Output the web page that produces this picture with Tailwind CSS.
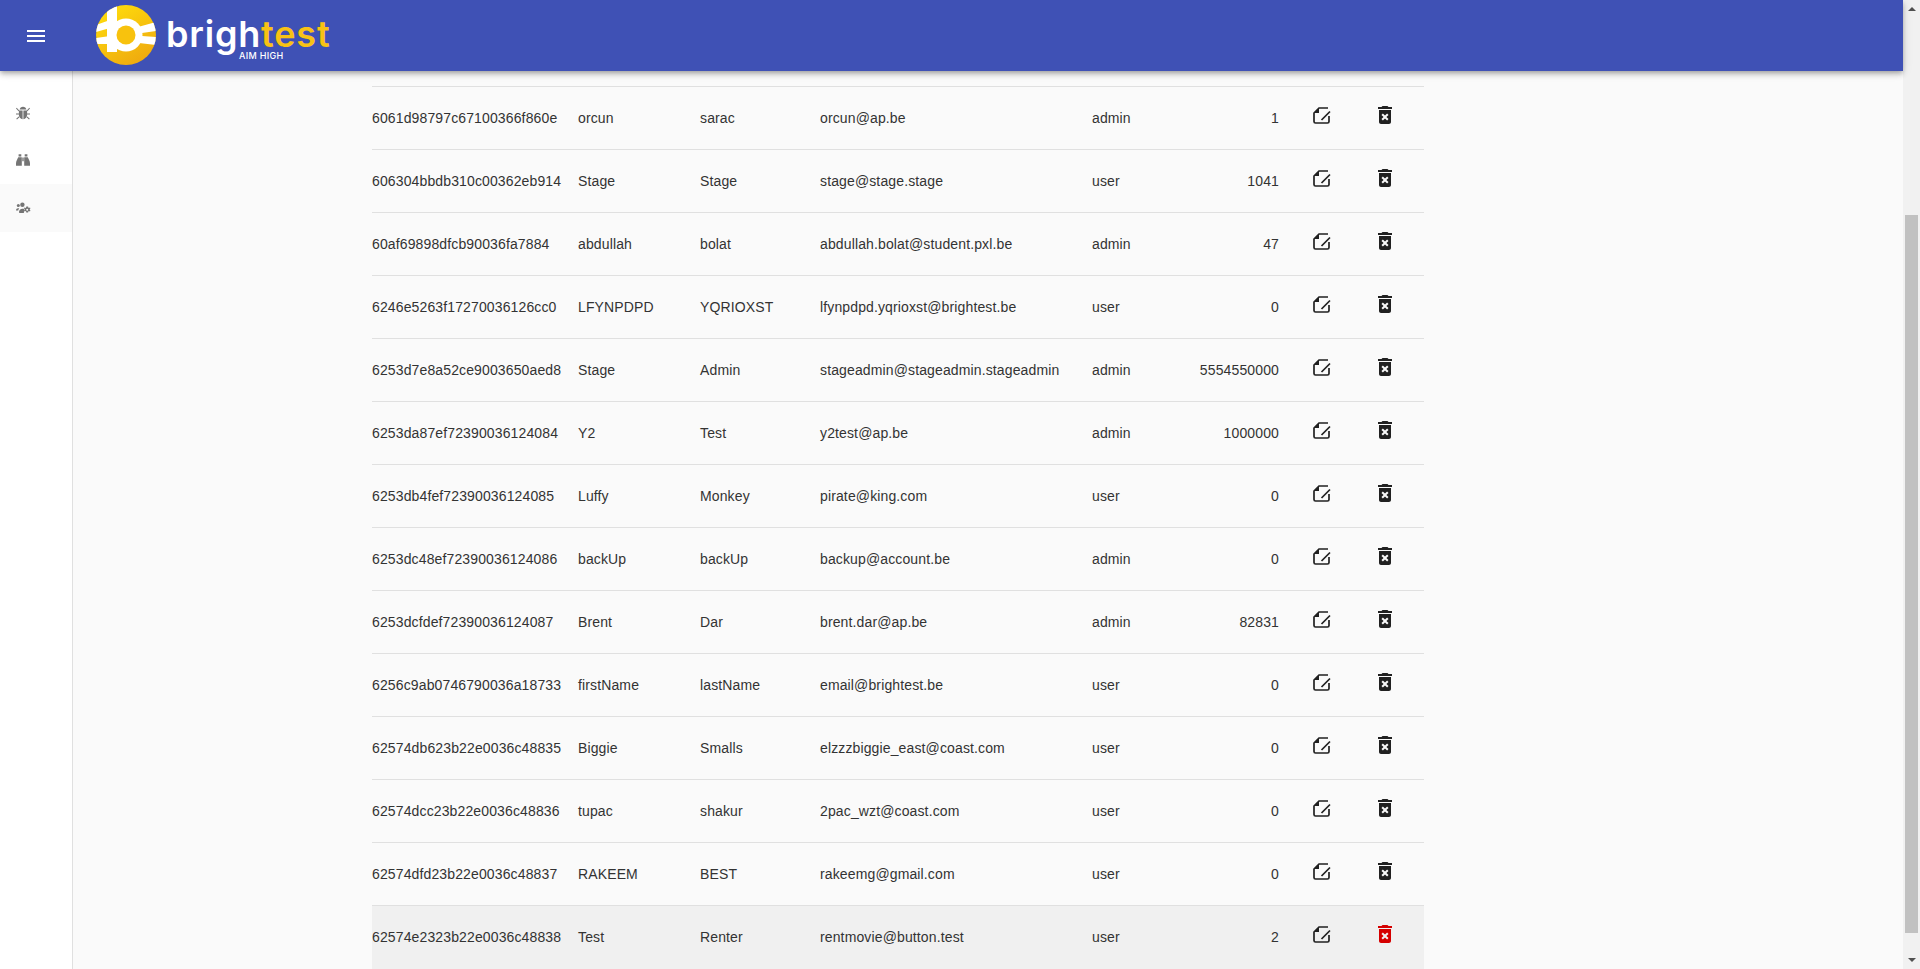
<!DOCTYPE html>
<html lang="en">
<head>
    <meta charset="UTF-8">
    <title>Brightest</title>
    <script src="https://cdn.jsdelivr.net/npm/@tailwindcss/browser@4"></script>
</head>
<body class="h-[969px] overflow-hidden bg-[#fafafa] font-['Liberation_Sans',Arial,sans-serif] text-[14px] tracking-[0.13px] text-[#333333]">
<!-- shared table icons -->
<svg class="hidden">
    <symbol id="edit-icon" viewBox="0 0 24 24">
        <path fill="none" stroke="currentColor" stroke-width="1.700" d="M19 5H10L5 10V18.500Q5 20 6.500 20H18.500Q20 20 20 18.500V13"/>
        <path fill="currentColor" d="M5 10H10V5z"/>
        <path fill="none" stroke="currentColor" stroke-width="1.700" d="M12.500 17L21 8.500"/>
    </symbol>
    <symbol id="trash-icon" viewBox="0 0 24 24">
        <path fill="currentColor" d="M6 19c0 1.100.9 2 2 2h8c1.100 0 2-.9 2-2V7H6v12zm2.460-7.120l1.410-1.410L12 12.590l2.120-2.120 1.410 1.410L13.410 14l2.120 2.120-1.410 1.410L12 15.410l-2.120 2.120-1.410-1.410L10.590 14l-2.130-2.120zM15.500 4l-1-1h-5l-1 1H5v2h14V4z"/>
    </symbol>
</svg>

<div class="flex h-[969px]">
    <div class="flex w-[1903px] flex-col">
        <!-- Header -->
        <header class="relative z-10 flex h-[71px] items-center bg-[#3f51b5] shadow-[0_2px_4px_-1px_rgba(0,0,0,.2),0_4px_5px_0_rgba(0,0,0,.14),0_1px_10px_0_rgba(0,0,0,.12)]">
            <button class="mt-[1px] ml-[27px] flex w-[18px] flex-col gap-[3px]">
                <span class="h-[2px] bg-white"></span>
                <span class="h-[2px] bg-white"></span>
                <span class="h-[2px] bg-white"></span>
            </button>
            <svg class="-mt-[1px] ml-[51px] shrink-0" width="60" height="60" viewBox="0 0 60 60">
                <defs>
                    <linearGradient id="sun" x1="0.2" y1="0" x2="0.8" y2="1">
                        <stop offset="0" stop-color="#ffdd0c"/>
                        <stop offset="1" stop-color="#eea70f"/>
                    </linearGradient>
                    <clipPath id="disc"><circle cx="30" cy="30" r="30"/></clipPath>
                </defs>
                <circle cx="30" cy="30" r="30" fill="url(#sun)"/>
                <g clip-path="url(#disc)" fill="#fff">
                    <rect x="11" y="0" width="10" height="47"/>
                    <path d="M0 20 L14 15 L14 23 L0 27Z M0 33 L14 31 L14 39 L0 39Z"/>
                    <path d="M42 22 L60 17 L60 26 L46 28Z M46 31 L60 32 L60 40 L43 38Z"/>
                    <circle cx="30" cy="30" r="16.500"/>
                </g>
                <circle cx="30" cy="30" r="9.500" fill="#f8c20d"/>
            </svg>
            <div class="relative -mt-[4px] ml-[10px] font-['Inter',sans-serif] text-[36px] leading-none font-semibold tracking-[0.8px] text-white">
                <span>brigh</span><span class="text-[#f8c215]">test</span>
                <span class="absolute top-[35px] left-[73px] text-[9px] leading-none font-medium tracking-[0.3px] whitespace-nowrap text-white">AIM HIGH</span>
            </div>
        </header>

        <div class="flex min-h-0 flex-1">
            <!-- Sidebar -->
            <nav class="w-[73px] shrink-0 border-r border-[#e0e0e0] bg-white pt-[17px]">
                <div class="flex h-[48px] items-center pl-[16px]">
                    <svg class="mt-[2px]" width="14" height="14" viewBox="0 0 14 14" fill="#757575">
                        <path d="M3.600 3.600C3.900 1.900 5.300.7 7 .7s3.100 1.200 3.400 2.900z"/>
                        <path d="M2.900 4.600h3.700v8.700C4.500 13 2.900 11.200 2.900 9zM7.400 4.600h3.700V9c0 2.200-1.600 4-3.700 4.300z"/>
                        <path d="M.7 1.800l2.600 2.800-.7.7L0 2.500zM13.300 1.800l-2.600 2.800.7.7L14 2.500zM0 7.400h3v1.100H0zM11 7.400h3v1.100h-3zM2.700 10.400l.7.8L1 13.400l-.8-.7zM11.300 10.400l-.7.8 2.400 2.200.8-.7z"/>
                    </svg>
                </div>
                <div class="flex h-[48px] items-center pl-[16px]">
                    <svg width="14" height="14" viewBox="0 0 14 14" fill="#757575">
                        <path d="M2.600 1.200h2.700v2.400H2.600zM8.700 1.200h2.700v2.400H8.700z"/>
                        <path d="M2.200 4.300h3.600v8.500H0v-2.300c0-1.200.3-2 .8-3.200zM8.200 4.300h3.600l1.400 3c.5 1.200.8 2 .8 3.200v2.300H8.200z"/>
                        <path d="M6.300 4.600h1.400v3.600H6.300z"/>
                    </svg>
                </div>
                <div class="flex h-[48px] items-center bg-[#fafafa] pl-[16px]">
                    <svg width="15" height="12" viewBox="0 0 15 12" fill="#757575">
                        <circle cx="2.300" cy="3.600" r="1.500"/>
                        <circle cx="6.400" cy="2.700" r="2.200"/>
                        <path d="M0 8.400c0-1.400.9-2.200 2-2.200.5 0 .9.1 1.200.4-.6.6-.9 1.300-1 2zM3 10c0-2 1.400-3.300 3.400-3.300.7 0 1.200.1 1.700.4l-.2 4H4c-.6 0-1-.4-1-1.100z"/>
                        <path fill-rule="evenodd" d="M11.200 4.400l.9.1.2 1 .7.4.9-.4.6.8-.7.7v.9l.7.7-.6.8-.9-.4-.7.4-.2 1h-1.800l-.2-1-.7-.4-.9.4-.6-.8.7-.7v-.9l-.7-.7.6-.8.9.4.7-.4.2-1zm0 2.300a1 1 0 100 2 1 1 0 000-2z"/>
                    </svg>
                </div>
            </nav>

            <!-- Users table -->
            <main class="min-w-0 flex-1 pt-[15px] pl-[299px]">
                <table class="w-[1052px] table-fixed border-collapse">
                    <colgroup>
                        <col class="w-[206px]"><col class="w-[122px]"><col class="w-[120px]"><col class="w-[272px]"><col class="w-[88px]"><col class="w-[99px]"><col class="w-[84px]"><col class="w-[61px]">
                    </colgroup>
                    <tbody>
                        <tr class="h-[63px] border-t border-[#e0e0e0]"><td>6061d98797c67100366f860e</td><td>orcun</td><td>sarac</td><td>orcun@ap.be</td><td>admin</td><td class="text-right">1</td><td><svg class="mx-auto -mt-[6px] text-[#212121]" width="24" height="24"><use href="#edit-icon"/></svg></td><td><svg class="-mt-[6px] ml-[10px] text-[#212121]" width="24" height="24"><use href="#trash-icon"/></svg></td></tr>
                        <tr class="h-[63px] border-t border-[#e0e0e0]"><td>606304bbdb310c00362eb914</td><td>Stage</td><td>Stage</td><td>stage@stage.stage</td><td>user</td><td class="text-right">1041</td><td><svg class="mx-auto -mt-[6px] text-[#212121]" width="24" height="24"><use href="#edit-icon"/></svg></td><td><svg class="-mt-[6px] ml-[10px] text-[#212121]" width="24" height="24"><use href="#trash-icon"/></svg></td></tr>
                        <tr class="h-[63px] border-t border-[#e0e0e0]"><td>60af69898dfcb90036fa7884</td><td>abdullah</td><td>bolat</td><td>abdullah.bolat@student.pxl.be</td><td>admin</td><td class="text-right">47</td><td><svg class="mx-auto -mt-[6px] text-[#212121]" width="24" height="24"><use href="#edit-icon"/></svg></td><td><svg class="-mt-[6px] ml-[10px] text-[#212121]" width="24" height="24"><use href="#trash-icon"/></svg></td></tr>
                        <tr class="h-[63px] border-t border-[#e0e0e0]"><td>6246e5263f17270036126cc0</td><td>LFYNPDPD</td><td>YQRIOXST</td><td>lfynpdpd.yqrioxst@brightest.be</td><td>user</td><td class="text-right">0</td><td><svg class="mx-auto -mt-[6px] text-[#212121]" width="24" height="24"><use href="#edit-icon"/></svg></td><td><svg class="-mt-[6px] ml-[10px] text-[#212121]" width="24" height="24"><use href="#trash-icon"/></svg></td></tr>
                        <tr class="h-[63px] border-t border-[#e0e0e0]"><td>6253d7e8a52ce9003650aed8</td><td>Stage</td><td>Admin</td><td>stageadmin@stageadmin.stageadmin</td><td>admin</td><td class="text-right">5554550000</td><td><svg class="mx-auto -mt-[6px] text-[#212121]" width="24" height="24"><use href="#edit-icon"/></svg></td><td><svg class="-mt-[6px] ml-[10px] text-[#212121]" width="24" height="24"><use href="#trash-icon"/></svg></td></tr>
                        <tr class="h-[63px] border-t border-[#e0e0e0]"><td>6253da87ef72390036124084</td><td>Y2</td><td>Test</td><td>y2test@ap.be</td><td>admin</td><td class="text-right">1000000</td><td><svg class="mx-auto -mt-[6px] text-[#212121]" width="24" height="24"><use href="#edit-icon"/></svg></td><td><svg class="-mt-[6px] ml-[10px] text-[#212121]" width="24" height="24"><use href="#trash-icon"/></svg></td></tr>
                        <tr class="h-[63px] border-t border-[#e0e0e0]"><td>6253db4fef72390036124085</td><td>Luffy</td><td>Monkey</td><td>pirate@king.com</td><td>user</td><td class="text-right">0</td><td><svg class="mx-auto -mt-[6px] text-[#212121]" width="24" height="24"><use href="#edit-icon"/></svg></td><td><svg class="-mt-[6px] ml-[10px] text-[#212121]" width="24" height="24"><use href="#trash-icon"/></svg></td></tr>
                        <tr class="h-[63px] border-t border-[#e0e0e0]"><td>6253dc48ef72390036124086</td><td>backUp</td><td>backUp</td><td>backup@account.be</td><td>admin</td><td class="text-right">0</td><td><svg class="mx-auto -mt-[6px] text-[#212121]" width="24" height="24"><use href="#edit-icon"/></svg></td><td><svg class="-mt-[6px] ml-[10px] text-[#212121]" width="24" height="24"><use href="#trash-icon"/></svg></td></tr>
                        <tr class="h-[63px] border-t border-[#e0e0e0]"><td>6253dcfdef72390036124087</td><td>Brent</td><td>Dar</td><td>brent.dar@ap.be</td><td>admin</td><td class="text-right">82831</td><td><svg class="mx-auto -mt-[6px] text-[#212121]" width="24" height="24"><use href="#edit-icon"/></svg></td><td><svg class="-mt-[6px] ml-[10px] text-[#212121]" width="24" height="24"><use href="#trash-icon"/></svg></td></tr>
                        <tr class="h-[63px] border-t border-[#e0e0e0]"><td>6256c9ab0746790036a18733</td><td>firstName</td><td>lastName</td><td>email@brightest.be</td><td>user</td><td class="text-right">0</td><td><svg class="mx-auto -mt-[6px] text-[#212121]" width="24" height="24"><use href="#edit-icon"/></svg></td><td><svg class="-mt-[6px] ml-[10px] text-[#212121]" width="24" height="24"><use href="#trash-icon"/></svg></td></tr>
                        <tr class="h-[63px] border-t border-[#e0e0e0]"><td>62574db623b22e0036c48835</td><td>Biggie</td><td>Smalls</td><td>elzzzbiggie_east@coast.com</td><td>user</td><td class="text-right">0</td><td><svg class="mx-auto -mt-[6px] text-[#212121]" width="24" height="24"><use href="#edit-icon"/></svg></td><td><svg class="-mt-[6px] ml-[10px] text-[#212121]" width="24" height="24"><use href="#trash-icon"/></svg></td></tr>
                        <tr class="h-[63px] border-t border-[#e0e0e0]"><td>62574dcc23b22e0036c48836</td><td>tupac</td><td>shakur</td><td>2pac_wzt@coast.com</td><td>user</td><td class="text-right">0</td><td><svg class="mx-auto -mt-[6px] text-[#212121]" width="24" height="24"><use href="#edit-icon"/></svg></td><td><svg class="-mt-[6px] ml-[10px] text-[#212121]" width="24" height="24"><use href="#trash-icon"/></svg></td></tr>
                        <tr class="h-[63px] border-t border-[#e0e0e0]"><td>62574dfd23b22e0036c48837</td><td>RAKEEM</td><td>BEST</td><td>rakeemg@gmail.com</td><td>user</td><td class="text-right">0</td><td><svg class="mx-auto -mt-[6px] text-[#212121]" width="24" height="24"><use href="#edit-icon"/></svg></td><td><svg class="-mt-[6px] ml-[10px] text-[#212121]" width="24" height="24"><use href="#trash-icon"/></svg></td></tr>
                        <tr class="h-[63px] border-t border-[#e0e0e0] bg-[#f0f0f0]"><td>62574e2323b22e0036c48838</td><td>Test</td><td>Renter</td><td>rentmovie@button.test</td><td>user</td><td class="text-right">2</td><td><svg class="mx-auto -mt-[6px] text-[#212121]" width="24" height="24"><use href="#edit-icon"/></svg></td><td><svg class="-mt-[6px] ml-[10px] text-[#d50000]" width="24" height="24"><use href="#trash-icon"/></svg></td></tr>
                    </tbody>
                </table>
            </main>
        </div>
    </div>

    <!-- Scrollbar -->
    <div class="flex w-[17px] shrink-0 flex-col items-center bg-[#f1f1f1]">
        <div class="mt-[7px] h-0 w-0 border-x-[4px] border-b-[4px] border-x-transparent border-b-[#505050]"></div>
        <div class="mt-[204px] h-[718px] w-[13px] bg-[#c1c1c1]"></div>
        <div class="mt-[25px] h-0 w-0 border-x-[4px] border-t-[4px] border-x-transparent border-t-[#505050]"></div>
    </div>
</div>
</body>
</html>
